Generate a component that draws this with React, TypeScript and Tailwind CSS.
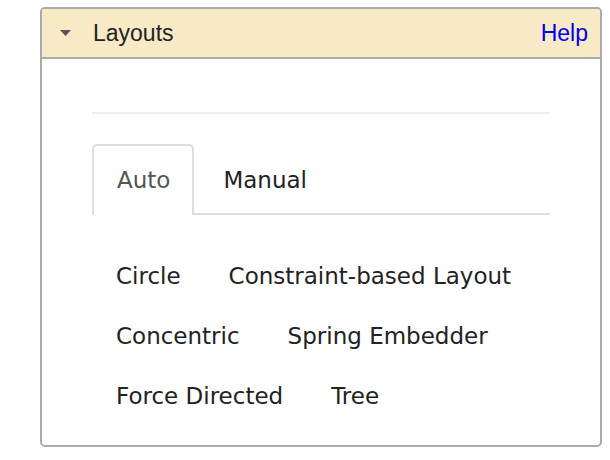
import { useState } from 'react';

const layouts = ['Circle', 'Constraint-based Layout', 'Concentric', 'Spring Embedder', 'Force Directed', 'Tree'];

export default function App() {
    const [tab, setTab] = useState('Auto');

    return (
        <div className="pl-[40px] pt-[7px] bg-white min-h-[460px]">
            <div className="w-[562px] h-[440px] border-2 border-[#aaa] rounded-[5px] overflow-hidden">
                {/* 헤더 */}
                <div
                    className="h-[50px] bg-[#f9eac7] border-b-2 border-[#aaa] flex items-center pl-[18px] pr-[12px] text-[23px] text-[#222]"
                    style={{ fontFamily: '"Liberation Sans", Arial, sans-serif' }}
                >
                    <svg width="11" height="6" viewBox="0 0 11 6" className="mr-[22px]">
                        <path d="M0 0 L11 0 L5.5 6 Z" fill="#555" />
                    </svg>
                    <span>Layouts</span>
                    <a href="#" className="ml-auto text-[#0000ee]">
                        Help
                    </a>
                </div>

                <div className="px-[50px]" style={{ fontFamily: '"DejaVu Sans", Verdana, sans-serif' }}>
                    <div className="mt-[53px] h-[2px] bg-[#eee]" />

                    {/* 탭 */}
                    <div className="mt-[30px] flex border-b-2 border-[#ddd] text-[23px]">
                        {['Auto', 'Manual'].map((t) => (
                            <button
                                key={t}
                                onClick={() => setTab(t)}
                                className={
                                    tab === t
                                        ? 'h-[71px] -mb-[2px] pl-[23px] pr-[22px] border-2 border-b-0 border-[#ddd] rounded-t-[5px] text-[#555] bg-white'
                                        : 'h-[71px] -mb-[2px] pl-[23px] pr-[22px] border-2 border-b-0 border-transparent ml-[4px] text-[#222]'
                                }
                            >
                                {t}
                            </button>
                        ))}
                    </div>

                    {/* 레이아웃 목록 */}
                    <div className="mt-[31px] flex flex-wrap text-[23px] text-[#222]">
                        {layouts.map((l) => (
                            <button key={l} className="h-[60px] px-[24px]">
                                {l}
                            </button>
                        ))}
                    </div>
                </div>
            </div>
        </div>
    );
}
